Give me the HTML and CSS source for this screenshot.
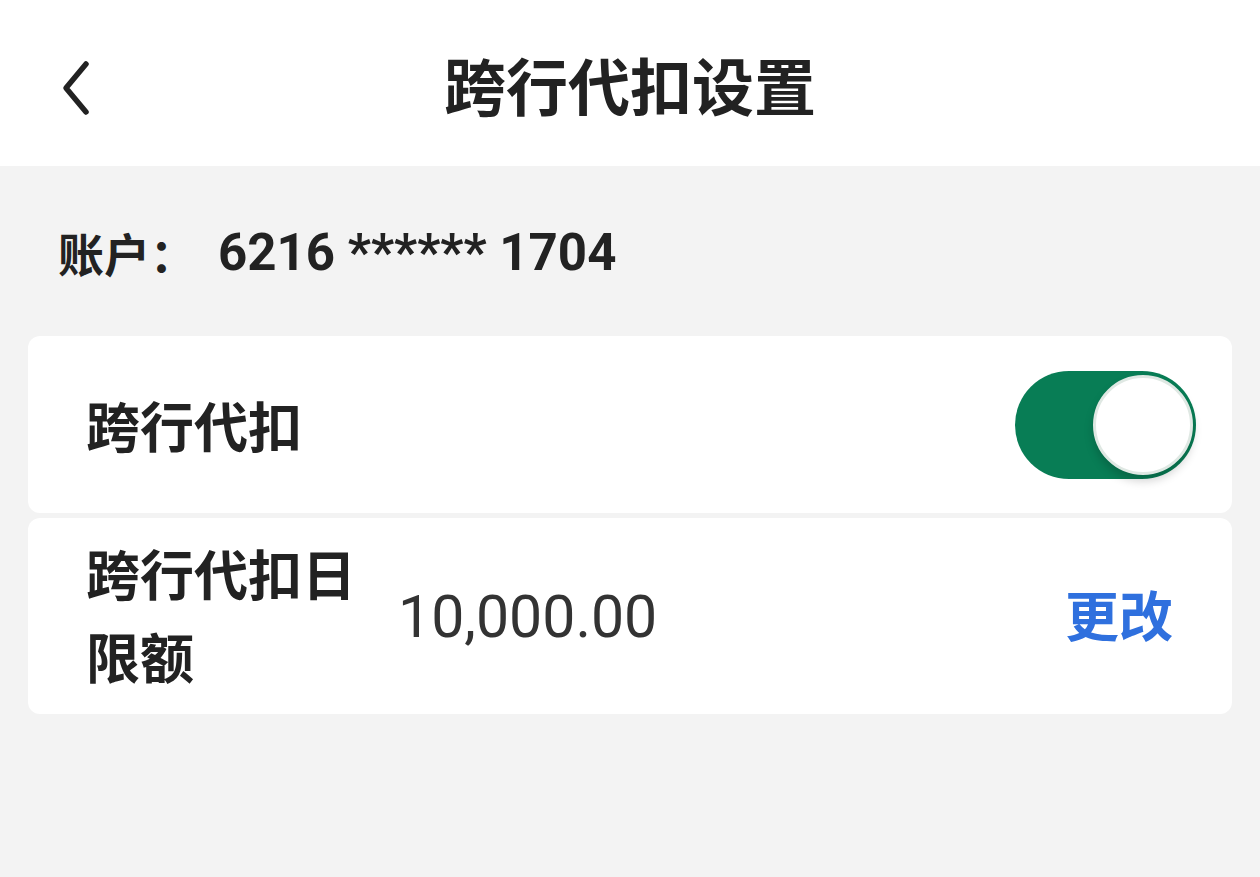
FILE: index.html
```html
<!DOCTYPE html>
<html lang="zh-CN">
<head>
<meta charset="utf-8">
<title>跨行代扣设置</title>
<link rel="stylesheet" href="styles.css">
</head>
<body>
<header class="topbar">
  <button class="back" aria-label="返回">
    <svg width="40" height="60" viewBox="0 0 40 60"><path d="M30 6 L10 30 L30 54" fill="none" stroke="#222" stroke-width="5.5" stroke-linecap="round" stroke-linejoin="round"/></svg>
  </button>
  <h1 class="title">跨行代扣设置</h1>
</header>
<main class="content">
  <div class="account"><span class="acc-label">账户：</span><span class="acc-no">6216 ****** 1704</span></div>
  <section class="card row-toggle">
    <span class="label">跨行代扣</span>
    <span class="switch on"><span class="knob"></span></span>
  </section>
  <section class="card row-limit">
    <span class="label wrap">跨行代扣日限额</span>
    <span class="value">10,000.00</span>
    <a class="action">更改</a>
  </section>
</main>
</body>
</html>
```
FILE: styles.css
```css
* { box-sizing: border-box; }
html, body {
  margin: 0;
  padding: 0;
  height: 100%;
}
body {
  background: #f3f3f3;
  font-family: "Noto Sans CJK SC", "Noto Sans", sans-serif;
  color: #222;
}
.topbar {
  height: 166px;
  background: #fff;
  display: flex;
  align-items: center;
  justify-content: center;
  position: relative;
}
.back {
  position: absolute;
  left: 56px;
  top: 58px;
  border: 0;
  background: none;
  padding: 0;
  display: flex;
}
.title {
  margin: 0;
  font-size: 62px;
  font-weight: 700;
  letter-spacing: 0;
  color: #222;
  padding-top: 2px;
}
.content {
  padding: 0 28px;
}
.account {
  font-weight: 700;
  height: 170px;
  display: flex;
  align-items: center;
  padding-left: 30px;
  padding-top: 2px;
  color: #222;
}
.acc-label {
  font-size: 46px;
}
.acc-no {
  font-family: Roboto, "Noto Sans CJK SC", sans-serif;
  font-size: 51px;
  margin-left: 22px;
}
.card {
  background: #fff;
  border-radius: 12px;
  display: flex;
  align-items: center;
  padding: 0 36px 0 58px;
}
.row-toggle {
  height: 177px;
  justify-content: space-between;
  margin-bottom: 5px;
}
.label {
  font-size: 54px;
  font-weight: 700;
  color: #222;
}
.switch {
  width: 181px;
  height: 108px;
  border-radius: 54px;
  background: #087d55;
  position: relative;
  display: block;
}
.knob {
  position: absolute;
  right: 3px;
  top: 4px;
  width: 100px;
  height: 100px;
  border-radius: 50%;
  background: #fff;
  border: 3px solid #dfe8e3;
  box-shadow: 0 6px 10px rgba(0,0,0,0.18);
}
.row-limit {
  height: 196px;
  padding-right: 59px;
}
.label.wrap {
  width: 282px;
  line-height: 83px;
  flex: none;
  padding-bottom: 4px;
}
.value {
  font-family: Roboto, "Noto Sans CJK SC", sans-serif;
  font-size: 59px;
  font-weight: 400;
  color: #333;
  margin-left: 30px;
  flex: 1;
}
.action {
  font-size: 54px;
  font-weight: 700;
  color: #2f70de;
  padding-bottom: 6px;
}
```
